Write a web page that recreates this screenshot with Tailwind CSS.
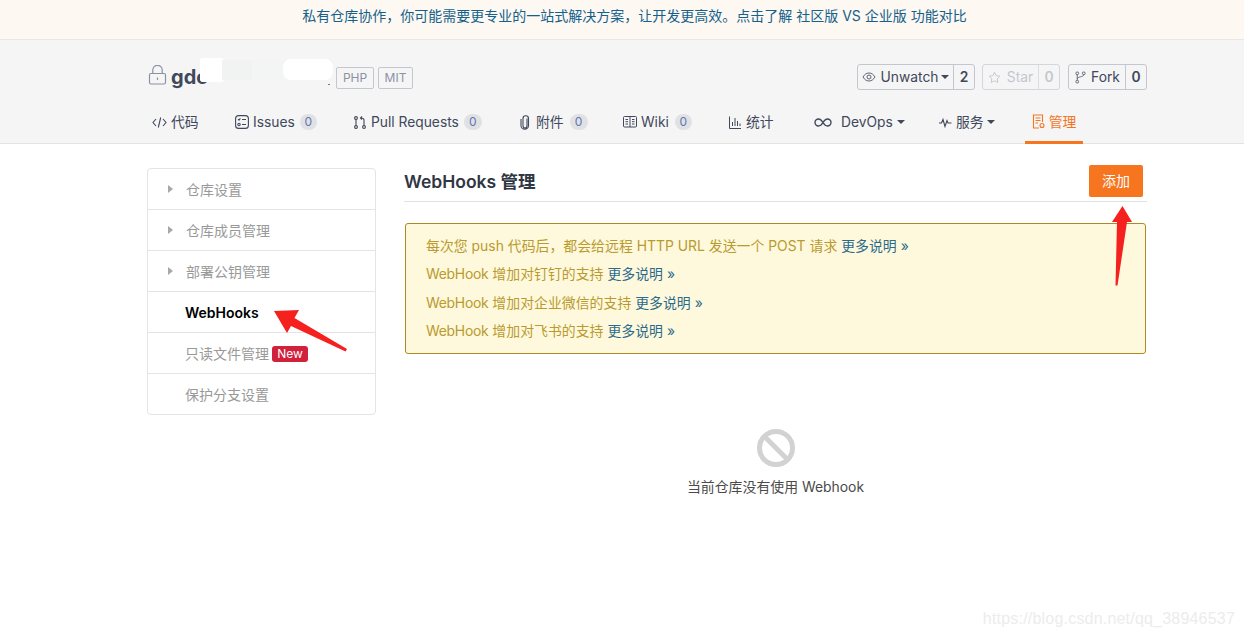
<!DOCTYPE html>
<html lang="zh">
<head>
<meta charset="utf-8">
<script src="https://cdn.jsdelivr.net/npm/@tailwindcss/browser@4"></script>
</head>
<body class="relative h-[637px] w-[1244px] overflow-hidden bg-white font-['Inter','Noto_Sans_CJK_SC',sans-serif] text-[14px] text-[#40485b]">
<div class="flex h-[40px] items-start justify-center border-b border-[#e8e8e8] bg-[#fdf8f2] pl-[25px] pt-[7px] text-[14px] leading-[18px] text-[#14618a]">私有仓库协作&#65292;你可能需要更专业的一站式解决方案&#65292;让开发更高效。点击了解 社区版 VS 企业版 功能对比</div>

<header class="h-[104px] border-b border-[#e3e3e3] bg-[#f5f5f5]">
  <div class="flex h-[64px] items-start pl-[147px] pr-[97px] pt-[24px]">
    <svg class="mt-[1px] h-[20px] w-[20px] text-[#8c92a4]" viewBox="0 0 20 20" fill="none" stroke="currentColor" stroke-width="1.200"><rect x="2.500" y="8.500" width="16" height="10.500" rx="1.500"/><path d="M5.800 8.500V5a4.700 4.700 0 0 1 9.400 0v3.500M10.500 12.500v2.500"/></svg>
    <span class="ml-[4px] w-[165px] text-[20px] font-bold leading-[26px] text-[#40485b]">gdc</span>
    <span class="mt-[3px] flex h-[22px] w-[38px] items-center justify-center rounded-[2px] border border-[#c4c7d0] text-[12px] text-[#8c92a4]">PHP</span>
    <span class="ml-[4px] mt-[3px] flex h-[22px] w-[35px] items-center justify-center rounded-[2px] border border-[#c4c7d0] text-[12px] text-[#8c92a4]">MIT</span>
    <div class="ml-auto flex h-[26px] items-stretch text-[13.800px]">
      <div class="flex rounded-[3px] border border-[#c4c7d0]">
        <span class="flex w-[96px] items-center justify-center gap-[5px] border-r border-[#c4c7d0]">
          <svg class="h-[14px] w-[14px] text-[#5a6275]" viewBox="0 0 14 14" fill="none" stroke="currentColor" stroke-width="1"><path d="M1 7c1.600-2.700 3.600-4 6-4s4.400 1.300 6 4c-1.600 2.700-3.600 4-6 4s-4.400-1.300-6-4z"/><circle cx="7" cy="7" r="2"/></svg>
          Unwatch<span class="ml-[-2px] h-0 w-0 border-x-[4px] border-t-[4px] border-x-transparent border-t-[#40485b]"></span></span>
        <span class="flex w-[20px] items-center justify-center font-semibold">2</span>
      </div>
      <div class="ml-[7px] flex rounded-[3px] border border-[#d4d6dc] text-[#c4c7d0]">
        <span class="flex w-[56px] items-center justify-center gap-[6px] border-r border-[#dcdde2]">
          <svg class="h-[13px] w-[13px]" viewBox="0 0 14 14" fill="none" stroke="currentColor" stroke-width="1"><path d="M7 1.300l1.800 3.700 4 .6-2.900 2.800.7 4L7 10.500l-3.600 1.900.7-4L1.200 5.600l4-.6z"/></svg>Star</span>
        <span class="flex w-[20px] items-center justify-center font-semibold">0</span>
      </div>
      <div class="ml-[8px] flex rounded-[3px] border border-[#c4c7d0]">
        <span class="flex w-[57px] items-center justify-center gap-[4px] border-r border-[#c4c7d0]">
          <svg class="h-[13px] w-[13px] text-[#5a6275]" viewBox="0 0 14 14" fill="none" stroke="currentColor" stroke-width="1"><circle cx="3.500" cy="2.500" r="1.500"/><circle cx="3.500" cy="11.500" r="1.500"/><circle cx="10.500" cy="2.500" r="1.500"/><path d="M3.500 4v6M10.500 4c0 2.500-7 2-7 4.500"/></svg>Fork</span>
        <span class="flex w-[20px] items-center justify-center font-semibold">0</span>
      </div>
    </div>
  </div>
  <nav class="relative h-[40px] text-[13.800px] leading-[20px] text-[#40485b]">
    <span class="absolute left-[152px] top-[8px] flex items-center gap-[4px]"><svg class="h-[15px] w-[15px]" viewBox="0 0 15 15" fill="none" stroke="currentColor" stroke-width="1.100"><path d="M4 4 1 7.500 4 11M11 4l3 3.500L11 11M8.700 2.500l-2.400 10"/></svg>代码</span>
    <span class="absolute left-[235px] top-[8px] flex items-center gap-[4px]"><svg class="h-[14px] w-[14px]" viewBox="0 0 14 14" fill="none" stroke="currentColor" stroke-width="1.100"><rect x=".6" y=".6" width="12.800" height="12.800" rx="3"/><path d="M7 4.500h4M7 9.500h4M3 4.200l1 1 1.400-1.800"/><circle cx="4" cy="9.500" r="1.200"/></svg>Issues<span class="ml-[1px] flex h-[16px] w-[17px] items-center justify-center rounded-full bg-[#e0e1e5] text-[12px] text-[#6478a8]">0</span></span>
    <span class="absolute left-[354px] top-[8px] flex items-center gap-[5px]"><svg class="h-[13px] w-[12px]" viewBox="0 0 12 13" fill="none" stroke="currentColor" stroke-width="1.100"><circle cx="2" cy="2" r="1.400"/><circle cx="2" cy="11" r="1.400"/><circle cx="10" cy="11" r="1.400"/><path d="M2 3.500v6M10 9.500V4C10 2.500 9 2 7 2M8 .5 6.500 2 8 3.500"/></svg>Pull Requests<span class="flex h-[16px] w-[18px] items-center justify-center rounded-full bg-[#e0e1e5] text-[12px] text-[#6478a8]">0</span></span>
    <span class="absolute left-[520px] top-[8px] flex items-center gap-[6px]"><svg class="h-[15px] w-[10px]" viewBox="0 0 10 15" fill="none" stroke="currentColor" stroke-width="1.100"><path d="M7 3.500v7.500a2 2 0 0 1-4 0V3.500a2.700 2.700 0 0 1 5.500 0V10.500a3.700 3.700 0 0 1-7.500 0V4"/></svg>附件<span class="flex h-[16px] w-[18px] items-center justify-center rounded-full bg-[#e0e1e5] text-[12px] text-[#6478a8]">0</span></span>
    <span class="absolute left-[623px] top-[8px] flex items-center gap-[4px]"><svg class="h-[12px] w-[14px]" viewBox="0 0 14 12" fill="none" stroke="currentColor" stroke-width="1"><rect x=".5" y=".5" width="13" height="10.500" rx="1"/><path d="M7 .5V11M2.500 3.500h2.500M2.500 5.700h2.500M2.500 8h2.500M9 3.500h2.500M9 5.700h2.500M9 8h2.500"/></svg>Wiki<span class="ml-[2px] flex h-[16px] w-[17px] items-center justify-center rounded-full bg-[#e0e1e5] text-[12px] text-[#6478a8]">0</span></span>
    <span class="absolute left-[729px] top-[8px] flex items-center gap-[5px]"><svg class="h-[13px] w-[12px]" viewBox="0 0 12 13" fill="none" stroke="currentColor" stroke-width="1"><path d="M.5.500v12h11.500M3.500 10V6M6 10V2M8.500 10V5M11 10V7.500"/></svg>统计</span>
    <span class="absolute left-[814px] top-[8px] flex items-center gap-[9px]"><svg class="h-[9px] w-[18px]" viewBox="0 0 18 9" fill="none" stroke="currentColor" stroke-width="1.400"><path d="M9 4.500C7.500 2 6.300 1 4.500 1a3.500 3.500 0 0 0 0 7C6.300 8 7.500 7 9 4.500c1.500-2.500 2.700-3.500 4.500-3.500a3.500 3.500 0 0 1 0 7C11.700 8 10.500 7 9 4.500z"/></svg>DevOps<span class="ml-[-5px] h-0 w-0 border-x-[4px] border-t-[4px] border-x-transparent border-t-[#40485b]"></span></span>
    <span class="absolute left-[939px] top-[8px] flex items-center gap-[4px]"><svg class="h-[11px] w-[13px]" viewBox="0 0 13 11" fill="none" stroke="currentColor" stroke-width="1.100"><path d="M0 6h2.500l1.500-3.500 2 7 2-6 1 2.500h3.500"/></svg>服务<span class="ml-[-1px] h-0 w-0 border-x-[4px] border-t-[4px] border-x-transparent border-t-[#40485b]"></span></span>
    <span class="absolute left-[1025px] top-0 flex h-[40px] w-[58px] items-start justify-center gap-[3px] border-b-[3px] border-[#f6751e] pt-[8px] text-[#f6751e]"><svg class="mt-[2px] h-[15px] w-[14px]" viewBox="0 0 14 15" fill="none" stroke="currentColor" stroke-width="1.100"><path d="M7 14H1.500V1h9v7M3.500 4h5M3.500 6.500h5M3.500 9h2.500"/><circle cx="10" cy="11.500" r="2"/></svg>管理</span>
  </nav>
</header>

<main class="flex pl-[147px] pr-[97px]">
  <aside class="mt-[24px] h-[247px] w-[229px] overflow-hidden rounded-[4px] border border-[#e2e4e8] text-[14px] text-[#999999]">
    <div class="flex h-[41px] items-center border-b border-[#e2e4e8] pl-[20px] pt-[1px]"><span class="mb-[2px] mr-[13px] h-0 w-0 border-y-[4px] border-l-[5px] border-y-transparent border-l-[#a8a8a8]"></span>仓库设置</div>
    <div class="flex h-[41px] items-center border-b border-[#e2e4e8] pl-[20px] pt-[1px]"><span class="mb-[2px] mr-[13px] h-0 w-0 border-y-[4px] border-l-[5px] border-y-transparent border-l-[#a8a8a8]"></span>仓库成员管理</div>
    <div class="flex h-[41px] items-center border-b border-[#e2e4e8] pl-[20px] pt-[1px]"><span class="mb-[2px] mr-[13px] h-0 w-0 border-y-[4px] border-l-[5px] border-y-transparent border-l-[#a8a8a8]"></span>部署公钥管理</div>
    <div class="flex h-[41px] items-center border-b border-[#e2e4e8] pl-[37px] pt-[1px] font-semibold text-black">WebHooks</div>
    <div class="flex h-[41px] items-center border-b border-[#e2e4e8] pl-[37px] pt-[1px]">只读文件管理<span class="ml-[3px] flex h-[16px] w-[36px] items-center justify-center rounded-[3px] bg-[#d1213c] text-[12px] text-white">New</span></div>
    <div class="flex h-[40px] items-center pl-[37px] pt-[1px]">保护分支设置</div>
  </aside>
  <section class="ml-[28px] w-[743px]">
    <div class="flex h-[58px] items-start justify-between border-b border-[#e2e2e2]">
      <h1 class="mt-[27px] text-[17.500px] font-semibold leading-[22px] text-[#303643]">WebHooks 管理</h1>
      <button class="mr-[4px] mt-[21px] flex h-[32px] w-[54px] items-center justify-center rounded-[2px] bg-[#f6751e] pb-[2px] text-[14px] text-white">添加</button>
    </div>
    <div class="ml-[1px] mt-[21px] flex h-[131px] w-[741px] flex-col rounded-[3px] border border-[#b08a20] bg-[#fef9dc] pl-[20px] pt-[8px] text-[13.900px] leading-[28.400px] text-[#b99a2f]">
      <p>每次您 push 代码后&#65292;都会给远程 HTTP URL 发送一个 POST 请求 <a class="text-[#2a6a8c]">更多说明 »</a></p>
      <p><span class="tracking-[-0.250px]">WebHook</span> 增加对钉钉的支持 <a class="text-[#2a6a8c]">更多说明 »</a></p>
      <p><span class="tracking-[-0.250px]">WebHook</span> 增加对企业微信的支持 <a class="text-[#2a6a8c]">更多说明 »</a></p>
      <p><span class="tracking-[-0.250px]">WebHook</span> 增加对飞书的支持 <a class="text-[#2a6a8c]">更多说明 »</a></p>
    </div>
    <div class="mt-[74px] flex flex-col items-center">
      <svg class="h-[40px] w-[40px] text-[#d2d2d2]" viewBox="0 0 40 40" fill="none" stroke="currentColor" stroke-width="5"><circle cx="20" cy="20" r="16.500"/><path d="M8.500 8.500l23 23"/></svg>
      <p class="mt-[9px] text-[13.900px] leading-[20px] text-[#4a4a4a]">当前仓库没有使用 Webhook</p>
    </div>
  </section>
</main>

<svg class="pointer-events-none absolute left-0 top-0 h-[637px] w-[1244px]" viewBox="0 0 1244 637">
  <path d="M274 311 299 310 294.500 318 347 349 345.500 351.500 291 326 287 333z" fill="#f5211f"/>
  <path d="M1122.500 206 1132 222 1127 222 1117.500 285.500 1115.500 285.500 1117 222 1112 222z" fill="#f5211f"/>
  <rect x="200" y="58" width="24" height="24" rx="3" fill="#ffffff"/><rect x="222" y="60" width="32" height="20" fill="#f0f3f2"/><rect x="252" y="60" width="32" height="20" fill="#f3f5f4"/><rect x="283" y="59" width="50" height="21" rx="8" fill="#ffffff"/>
  <rect x="328" y="84" width="2" height="1" fill="#777777"/>
</svg>
<div class="absolute right-[9px] top-[610px] font-['Liberation_Sans',sans-serif] text-[16px] leading-[18px] tracking-[0.200px] text-[#ececec]">https://blog.csdn.net/qq_38946537</div>
</body>
</html>
